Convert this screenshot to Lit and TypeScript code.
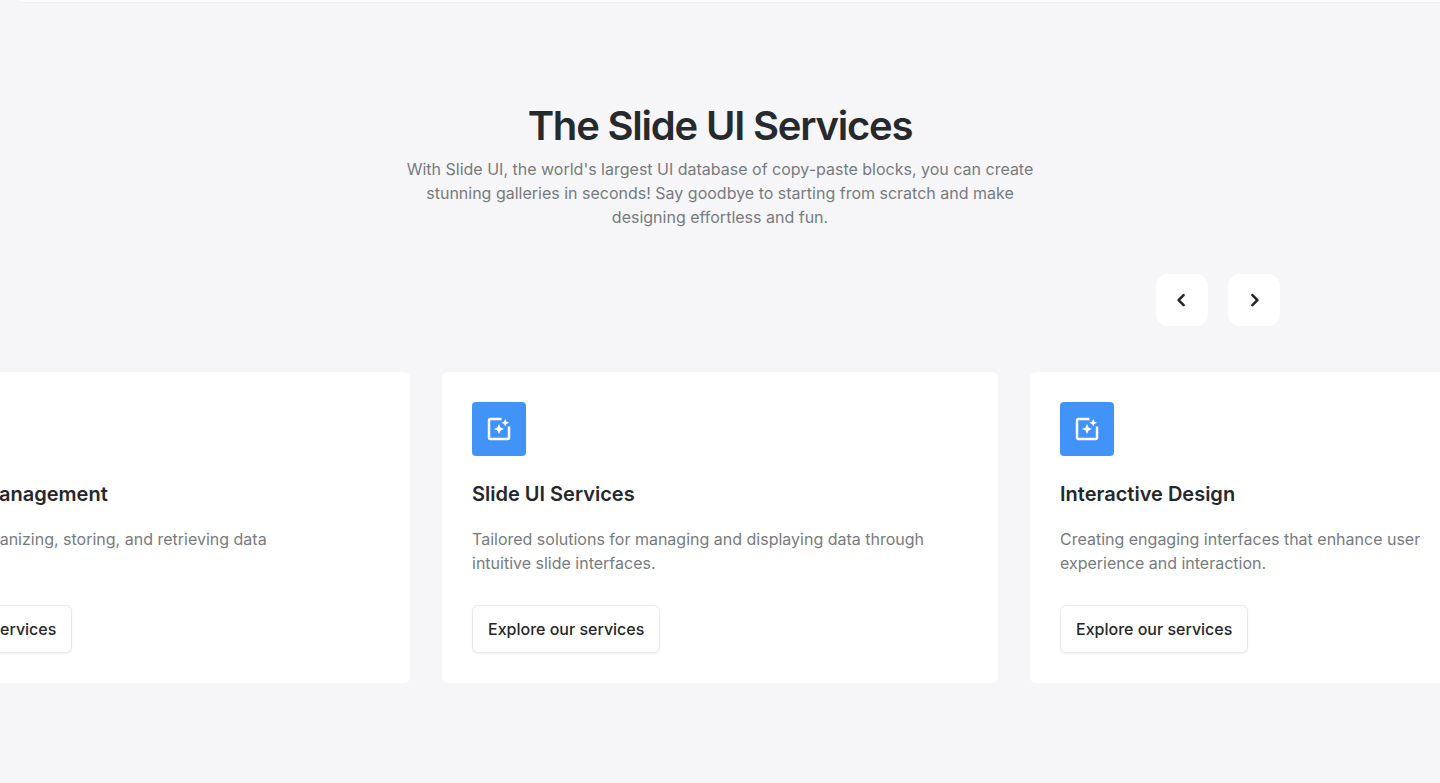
import { LitElement, html, css, svg } from "lit";
import { customElement, property } from "lit/decorators.js";

interface Service {
  title: string;
  text: string;
}

const services: Service[] = [
  {
    title: "Database Management",
    text: "Support for organizing, storing, and retrieving data\nefficiently.",
  },
  {
    title: "Slide UI Services",
    text: "Tailored solutions for managing and displaying data through\nintuitive slide interfaces.",
  },
  {
    title: "Interactive Design",
    text: "Creating engaging interfaces that enhance user\nexperience and interaction.",
  },
];

const photoFilter = svg`<path
  d="M19.02 10v9H5V5h9V3H5.02c-1.1 0-2 .9-2 2v14c0 1.1.9 2 2 2H19c1.1 0 2-.9 2-2v-9h-1.98zM17 10l.94-2.06L20 7l-2.06-.94L17 4l-.94 2.06L14 7l2.06.94zm-3.75.75L12 8l-1.25 2.75L8 12l2.75 1.25L12 16l1.25-2.75L16 12z"
/>`;

@customElement("service-card")
export class ServiceCard extends LitElement {
  static styles = css`
    :host {
      display: block;
      box-sizing: border-box;
      padding: 30px;
      background: #fff;
      border-radius: 6px;
    }
    .icon {
      display: flex;
      width: 54px;
      height: 54px;
      align-items: center;
      justify-content: center;
      border-radius: 4px;
      background: #4193f8;
    }
    .icon svg {
      width: 30px;
      height: 30px;
      fill: #fff;
    }
    .title {
      margin: 24px 0 19px;
      font-size: 20px;
      line-height: 28px;
      font-weight: 600;
      color: #25282a;
    }
    .text {
      margin: 0 0 30px;
      min-height: 48px;
      font-size: 16px;
      line-height: 24px;
      font-weight: 400;
      white-space: pre-line;
      color: #777b7e;
    }
    .action {
      display: block;
      box-sizing: border-box;
      height: 48px;
      padding: 0 15px;
      border: 1px solid #e8eaeb;
      border-radius: 6px;
      background: #fff;
      box-shadow: 0 1px 2px rgba(20, 30, 40, 0.06);
      font: 500 16px/24px Inter, sans-serif;
      color: #25282a;
      cursor: pointer;
    }
  `;

  @property() heading = "";
  @property() text = "";

  render() {
    return html`
      <div class="icon">
        <svg viewBox="0 0 24 24" aria-hidden="true">${photoFilter}</svg>
      </div>
      <h3 class="title">${this.heading}</h3>
      <p class="text">${this.text}</p>
      <button class="action" type="button">Explore our services</button>
    `;
  }
}

@customElement("app-root")
export class AppRoot extends LitElement {
  static styles = css`
    :host {
      display: block;
      min-height: 100vh;
      box-sizing: border-box;
      overflow: hidden;
      background: #f6f6f9;
      font-family: Inter, sans-serif;
    }
    .edge {
      height: 2px;
      margin-left: 20px;
      background: #fdfdfe;
      border-bottom: 1px solid #ededf1;
    }
    .services {
      padding: 98px 0 100px;
    }
    .intro {
      box-sizing: border-box;
      max-width: 680px;
      margin: 0 auto;
      padding: 0 20px;
      text-align: center;
    }
    .heading {
      margin: 0 0 6px;
      font-size: 40px;
      line-height: 50px;
      font-weight: 600;
      letter-spacing: -0.03em;
      color: #272a2d;
    }
    .lead {
      margin: 0;
      font-size: 16px;
      line-height: 24px;
      color: #777b7e;
    }
    .controls {
      display: flex;
      justify-content: flex-end;
      gap: 20px;
      box-sizing: border-box;
      max-width: 1160px;
      margin: 45px auto 46px;
      padding: 0 20px;
    }
    .arrow {
      display: flex;
      align-items: center;
      justify-content: center;
      width: 52px;
      height: 52px;
      padding: 0;
      border: 0;
      border-radius: 12px;
      background: #fff;
      cursor: pointer;
    }
    .arrow svg {
      width: 20px;
      height: 20px;
      fill: none;
      stroke: #25282a;
      stroke-width: 2.6;
      stroke-linecap: round;
      stroke-linejoin: round;
    }
    .track {
      display: flex;
      justify-content: center;
      gap: 32px;
    }
    .card {
      flex: 0 0 min(556px, 85vw);
    }
  `;

  render() {
    return html`
      <div class="edge"></div>
      <section class="services">
        <header class="intro">
          <h2 class="heading">The Slide UI Services</h2>
          <p class="lead">
            With Slide UI, the world's largest UI database of copy-paste blocks, you can create
            stunning galleries in seconds! Say goodbye to starting from scratch and make designing
            effortless and fun.
          </p>
        </header>
        <div class="controls">
          <button class="arrow" type="button" aria-label="Previous">
            <svg viewBox="0 0 20 20" aria-hidden="true"><path d="M11.6 5.2 6.6 10.2l5 5" /></svg>
          </button>
          <button class="arrow" type="button" aria-label="Next">
            <svg viewBox="0 0 20 20" aria-hidden="true"><path d="M8.4 5.2l5 5-5 5" /></svg>
          </button>
        </div>
        <div class="track">
          ${services.map(
            (s) => html`<service-card class="card" .heading=${s.title} .text=${s.text}></service-card>`
          )}
        </div>
      </section>
    `;
  }
}
